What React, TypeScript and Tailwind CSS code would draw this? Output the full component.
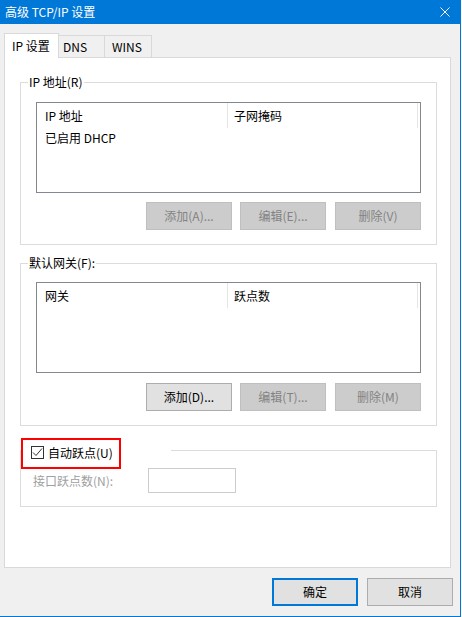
import React from "react";

type BtnProps = { children: React.ReactNode; disabled?: boolean; primary?: boolean; className?: string };

function Btn({ children, disabled, primary, className = "" }: BtnProps) {
  const tone = disabled
    ? "bg-[#cccccc] border border-[#bfbfbf] text-[#838383]"
    : primary
      ? "bg-[#e1e1e1] border-2 border-[#0078d7] text-black"
      : "bg-[#e1e1e1] border border-[#adadad] text-black";
  return (
    <div className={`w-[86px] h-[28px] flex items-center justify-center text-[12px] ${tone} ${className}`}>
      {children}
    </div>
  );
}

function ListBox({ cols, rows }: { cols: [string, string]; rows: string[] }) {
  return (
    <div className="w-[385px] h-[91px] border border-[#828790] bg-white">
      <div className="flex h-[25px]">
        <div className="w-[191px] border-r border-[#e5e5e5] pl-[8px] flex items-center">{cols[0]}</div>
        <div className="w-[190px] border-r border-[#e5e5e5] pl-[6px] flex items-center">{cols[1]}</div>
      </div>
      {rows.map((r) => (
        <div key={r} className="h-[20px] pl-[8px] flex items-center">{r}</div>
      ))}
    </div>
  );
}

function Group({ label, children, className = "" }: { label: string; children: React.ReactNode; className?: string }) {
  return (
    <fieldset className={`w-[417px] ml-[15px] border border-[#dcdcdc] ${className}`}>
      <legend className="ml-[7px] px-[1px] leading-[16px]">{label}</legend>
      <div className="pl-[15px] pb-[14px]">{children}</div>
    </fieldset>
  );
}

export default function App() {
  return (
    <div className="w-[462px] h-[617px] bg-white font-['Noto_Sans_CJK_SC','Noto_Sans',sans-serif] text-[12px] text-black">
      <div className="w-[461px] h-[617px] bg-[#f0f0f0] border-r border-b border-[#0078d7] flex flex-col">
        {/* title bar */}
        <div className="h-[24px] bg-[#0078d7] flex items-center justify-between pl-[5px] pr-[10px] text-white">
          <span>高级 TCP/IP 设置</span>
          <svg width="10" height="10" viewBox="0 0 10 10" className="mb-[1px]">
            <path d="M0.5 0.5 L9.5 9.5 M9.5 0.5 L0.5 9.5" stroke="white" strokeWidth="1" />
          </svg>
        </div>

        {/* tabs */}
        <div className="ml-[4px] mt-[9px] h-[24px] flex items-end">
          <div className="relative z-10 w-[55px] h-[25px] -mb-px bg-white border-l border-t border-r border-[#d9d9d9] pl-[7px] flex items-center">
            IP 设置
          </div>
          <div className="w-[46px] h-[22px] border-t border-r border-[#d9d9d9] pl-[4px] flex items-center">DNS</div>
          <div className="w-[47px] h-[22px] border-t border-r border-[#d9d9d9] pl-[7px] flex items-center">WINS</div>
        </div>

        {/* panel */}
        <div className="ml-[4px] w-[447px] h-[511px] bg-white border border-[#d9d9d9] flex flex-col">
          <Group label="IP 地址(R)" className="mt-[16px]">
            <div className="mt-[12px]">
              <ListBox cols={["IP 地址", "子网掩码"]} rows={["已启用 DHCP"]} />
            </div>
            <div className="w-[385px] mt-[9px] flex justify-end">
              <Btn disabled className="mr-[8px]">添加(A)...</Btn>
              <Btn disabled className="mr-[9px]">编辑(E)...</Btn>
              <Btn disabled>删除(V)</Btn>
            </div>
          </Group>

          <Group label="默认网关(F):" className="mt-[10px]">
            <div className="mt-[11px]">
              <ListBox cols={["网关", "跃点数"]} rows={[]} />
            </div>
            <div className="w-[385px] mt-[10px] flex justify-end">
              <Btn className="mr-[8px]">添加(D)...</Btn>
              <Btn disabled className="mr-[9px]">编辑(T)...</Btn>
              <Btn disabled>删除(M)</Btn>
            </div>
          </Group>

          <fieldset className="w-[417px] ml-[15px] mt-[14px] border border-[#dcdcdc]">
            <legend className="relative w-[150px] h-[20px] pt-[5px] pl-[10px] flex items-center">
              <span className="w-[13px] h-[13px] border border-[#333333] bg-white flex items-center justify-center">
                <svg width="11" height="11" viewBox="0 0 11 11">
                  <path d="M1 5.5 L4 8.5 L10 1.5" fill="none" stroke="#333333" strokeWidth="1" />
                </svg>
              </span>
              <span className="ml-[4px]">自动跃点(U)</span>
              <span className="absolute left-0 top-[-2px] w-[100px] h-[31px] border-2 border-[#ff0000]" />
            </legend>
            <div className="pl-[12px] pt-[8px] pb-[13px] flex items-center">
              <span className="w-[115px] text-[#a0a0a0]">接口跃点数(N):</span>
              <div className="w-[88px] h-[25px] border border-[#cccccc] bg-white" />
            </div>
          </fieldset>
        </div>

        {/* footer buttons */}
        <div className="mt-[10px] pr-[7px] flex justify-end gap-[9px]">
          <Btn primary>确定</Btn>
          <Btn>取消</Btn>
        </div>
      </div>
    </div>
  );
}
